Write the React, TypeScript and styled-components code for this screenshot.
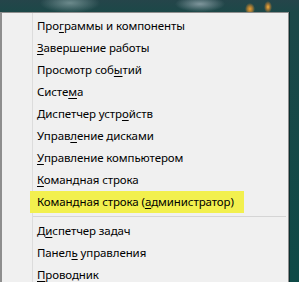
import React from "react";
import styled, { createGlobalStyle } from "styled-components";

const Global = createGlobalStyle`
  html, body { margin: 0; padding: 0; }
  body {
    width: 299px;
    height: 282px;
    overflow: hidden;
    background: #0f4644;
  }
`;

const Desktop = styled.div`
  position: relative;
  width: 299px;
  height: 282px;
  overflow: hidden;
  padding-top: 12px;
  box-sizing: border-box;
  background:
    radial-gradient(ellipse 5px 6px at 250px 9px, #f0a030 0%, rgba(240,150,40,0.6) 50%, rgba(0,0,0,0) 100%),
    radial-gradient(ellipse 4px 6px at 268px 7px, #f7b23c 0%, rgba(230,140,40,0.6) 50%, rgba(0,0,0,0) 100%),
    radial-gradient(ellipse 30px 10px at 70px 3px, #6c8a8c 0%, rgba(0,0,0,0) 100%),
    radial-gradient(ellipse 25px 8px at 200px 4px, #7f969c 0%, rgba(0,0,0,0) 100%),
    linear-gradient(180deg, #25454a 0px, #1c4848 12px, #0e4a47 100%);
`;

const Menu = styled.div`
  position: relative;
  width: 289px;
  height: 290px;
  box-sizing: border-box;
  background: #f0f0f0;
  border: 1px solid #8e8e8e;
  border-left-width: 2px;
  box-shadow: 1px 0 0 #0a2e2e;
  padding: 2px 0 0 0;
  display: flex;
  flex-direction: column;
  font-family: "Noto Sans", "Open Sans", sans-serif;
  font-size: 11.5px;
  letter-spacing: -0.1px;
  color: #000;
  &::before {
    content: "";
    position: absolute;
    left: 30px;
    top: 0;
    bottom: 0;
    width: 1px;
    background: #dcdcdc;
  }
`;

const Item = styled.div<{ $hl?: boolean }>`
  position: relative;
  height: 22px;
  line-height: 22px;
  margin-left: ${(p) => (p.$hl ? "28px" : "0")};
  padding-left: ${(p) => (p.$hl ? "7px" : "35px")};
  padding-right: ${(p) => (p.$hl ? "10px" : "0")};
  width: ${(p) => (p.$hl ? "fit-content" : "auto")};
  background: ${(p) => (p.$hl ? "#f2f04e" : "transparent")};
  white-space: nowrap;
`;

const Sep = styled.div`
  height: 1px;
  margin: 3px 2px 3px 31px;
  background: #d5d5d5;
`;

const U = styled.span`
  text-decoration: underline;
  text-underline-offset: 2px;
`;

type Row = { pre: string; u: string; post: string; hl?: boolean; sepAfter?: boolean };

const rows: Row[] = [
  { pre: "Про", u: "г", post: "раммы и компоненты" },
  { pre: "", u: "З", post: "авершение работы" },
  { pre: "Просмотр соб", u: "ы", post: "тий" },
  { pre: "Систе", u: "м", post: "а" },
  { pre: "Диспетчер устр", u: "о", post: "йств" },
  { pre: "Управ", u: "л", post: "ение дисками" },
  { pre: "", u: "У", post: "правление компьютером" },
  { pre: "", u: "К", post: "омандная строка" },
  { pre: "Командная строка (", u: "а", post: "дминистратор)", hl: true, sepAfter: true },
  { pre: "Д", u: "и", post: "спетчер задач" },
  { pre: "Панел", u: "ь", post: " управления" },
  { pre: "", u: "П", post: "роводник" },
];

export default function App() {
  return (
    <>
      <Global />
      <Desktop>
        <Menu>
          {rows.map((r, i) => (
            <React.Fragment key={i}>
              <Item $hl={r.hl}>
                {r.pre}
                <U>{r.u}</U>
                {r.post}
              </Item>
              {r.sepAfter && <Sep />}
            </React.Fragment>
          ))}
        </Menu>
      </Desktop>
    </>
  );
}
